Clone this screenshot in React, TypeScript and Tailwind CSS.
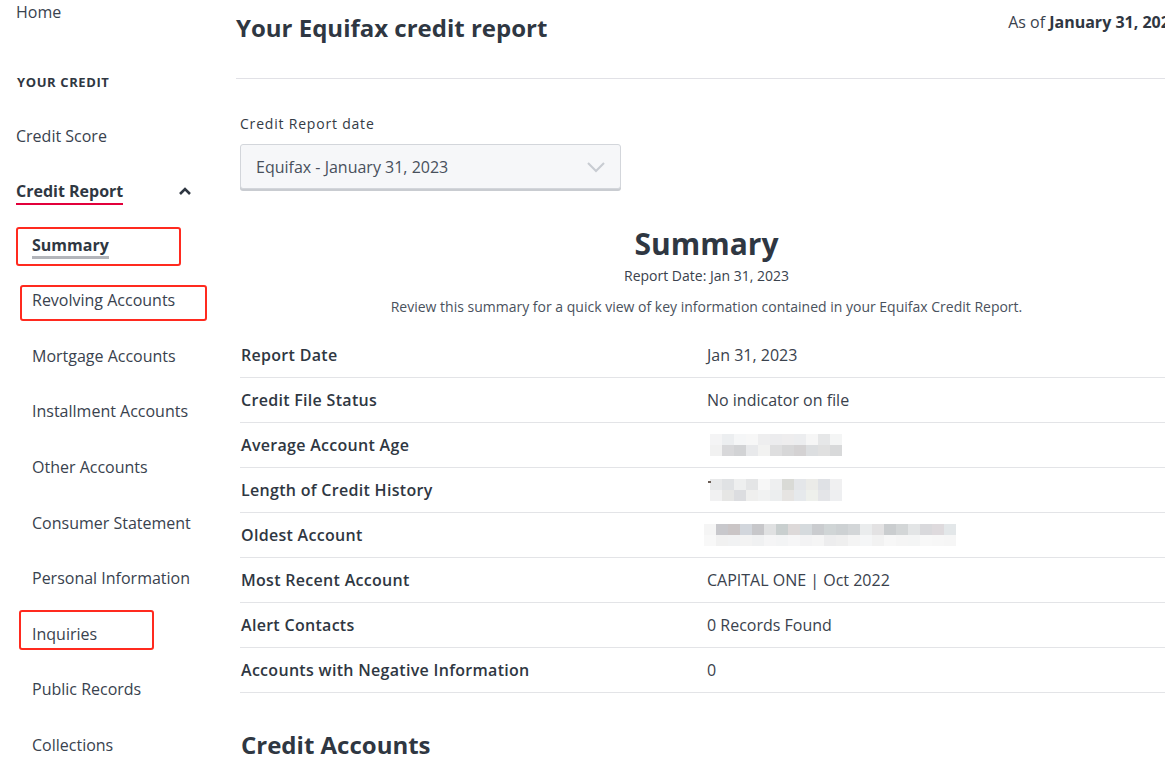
import React from "react";

const font = { fontFamily: '"Open Sans", "Liberation Sans", sans-serif' };

function Mosaic({ rows, cell = 12, h = 11 }: { rows: string[][]; cell?: number; h?: number }) {
  const w = Math.max(...rows.map((r) => r.length)) * cell;
  return (
    <svg width={w} height={rows.length * h} className="block">
      {rows.map((r, i) =>
        r.map((c, j) => <rect key={i + "-" + j} x={j * cell} y={i * h} width={cell} height={h} fill={c} />)
      )}
    </svg>
  );
}

const subItems = [
  "Revolving Accounts",
  "Mortgage Accounts",
  "Installment Accounts",
  "Other Accounts",
  "Consumer Statement",
  "Personal Information",
  "Inquiries",
  "Public Records",
  "Collections",
];

function Sidebar() {
  return (
    <aside className="w-[236px] shrink-0 text-[#39424e]">
      <div className="pl-4 text-[16px] leading-6">Home</div>
      <div className="pl-[17px] mt-[49px] text-[13px] leading-[18px] font-bold tracking-[0.6px] text-[#2f3742]">YOUR CREDIT</div>
      <div className="pl-4 mt-[33px] text-[16px] leading-6">Credit Score</div>
      <div className="pl-4 mt-[31px] flex items-center">
        <span className="font-bold text-[16px] leading-6 border-b-2 border-[#e2003b] text-[#2f3742]">Credit Report</span>
        <svg width="14" height="10" viewBox="0 0 14 10" className="ml-[55px] mt-[-2px]">
          <path d="M2 8 L7 3 L12 8" fill="none" stroke="#2f3742" strokeWidth="2.6" />
        </svg>
      </div>
      <div className="mt-[12px]">
        <div className="relative h-[55.5px] flex items-center pl-8">
          <span className="font-bold text-[16px] leading-[22px] border-b-[3px] border-[#b3b5ba] text-[#2f3742] mt-[3px]">Summary</span>
          <div className="absolute left-4 top-[10px] w-[165px] h-[39px] border-2 border-[#ff2a1f] rounded-[3px]" />
        </div>
        {subItems.map((s) => (
          <div key={s} className="relative h-[55.6px] flex items-center pl-8 text-[16px] leading-[22px]">
            {s}
            {s === "Revolving Accounts" && (
              <div className="absolute left-5 top-[12px] w-[187px] h-[36px] border-2 border-[#ff2a1f] rounded-[3px]" />
            )}
            {s === "Inquiries" && (
              <div className="absolute left-[19px] top-[4px] w-[135px] h-[40px] border-2 border-[#ff2a1f] rounded-[3px]" />
            )}
          </div>
        ))}
      </div>
    </aside>
  );
}

const rows: { label: string; value?: string; mosaic?: React.ReactNode }[] = [
  { label: "Report Date", value: "Jan 31, 2023" },
  { label: "Credit File Status", value: "No indicator on file" },
  {
    label: "Average Account Age",
    mosaic: (
      <div className="ml-[3px]">
        <Mosaic
          rows={[
            ["#f4f4f5", "#eceef0", "#f5f6f7", "#f7f7f7", "#eeeeef", "#ececee", "#eeedee", "#ecedef", "#f6f6f6", "#e6e7e8", "#f4f5f5"],
            ["#f1f1f1", "#d8d8da", "#d2d3d5", "#e8e9eb", "#f2f2f1", "#dededf", "#d7d7d8", "#d4d2d3", "#dcdee0", "#e0e0e0", "#d8d9da"],
          ]}
        />
      </div>
    ),
  },
  {
    label: "Length of Credit History",
    mosaic: (
      <div className="ml-[3px] relative">
        <Mosaic
          rows={[
            ["#e8e9ea", "#e0e2e4", "#eeefef", "#e4e5e6", "#f7f7f7", "#eeeff0", "#d9dad6", "#e4e6e9", "#ebebe8", "#dfe1e5", "#f0f0f1"],
            ["#f1f1f2", "#e6e6e5", "#dcdde0", "#efefee", "#f1f2f2", "#eceeef", "#e6e4e2", "#e6e9ec", "#eef0ec", "#e4e5e8", "#eeeff1"],
          ]}
        />
        <div className="absolute left-[-2px] top-[2px] w-[3px] h-[2px] bg-[#6b5d55]" />
      </div>
    ),
  },
  {
    label: "Oldest Account",
    mosaic: (
      <div className="ml-[-3px]">
        <Mosaic
          rows={[
            ["#f5f5f5", "#c8c8cc", "#cac5c6", "#d2d6dc", "#c7c7ca", "#e0e1e2", "#c9cfcf", "#ddd9d9", "#d5dadd", "#cacccf", "#d0d5d6", "#cdd1d3", "#d3d6d8", "#eaeced", "#e3e2e3", "#cacdcf", "#d3d6d7", "#e3e5e6", "#d9d9dc", "#dedadd", "#e3e7e9"],
            ["#f8f8f8", "#f1f1f1", "#f1f2f3", "#f3f3f3", "#f0f1f2", "#f5f5f6", "#f3f4f5", "#f6f6f7", "#f3f3f4", "#f5f5f5", "#ededee", "#efefef", "#f4f4f4", "#f5f6f7", "#f2f2f2", "#f7f7f7", "#f5f5f5", "#f4f5f5", "#f8f8f8", "#f7f7f7", "#f6f6f6"],
          ]}
        />
      </div>
    ),
  },
  { label: "Most Recent Account", value: "CAPITAL ONE | Oct 2022" },
  { label: "Alert Contacts", value: "0 Records Found" },
  { label: "Accounts with Negative Information", value: "0" },
];

export default function App() {
  return (
    <div className="w-[1165px] h-[783px] overflow-hidden bg-white flex" style={font}>
      <Sidebar />
      <main className="w-[937px] shrink-0">
        <header className="h-[79px] border-b border-[#e1e1e6] flex justify-between items-start pt-[10px]">
          <h1 className="mt-[2px] text-[24px] leading-8 font-bold text-[#2f3742]">Your Equifax credit report</h1>
          <div className="mr-[-6px] text-[16px] leading-6 text-[#3a424d] whitespace-nowrap">
            As of <span className="font-bold text-[#2f3742]">January 31, 2023</span>
          </div>
        </header>
        <div className="pl-1">
          <div className="mt-[35px] text-[14px] leading-5 tracking-[0.8px] text-[#333b45]">Credit Report date</div>
          <div className="mt-[10px] w-[381px] h-[45px] bg-[#f6f7f9] border border-[#d3d6db] rounded-[3px] shadow-[0_2px_0_#c9ccd1] flex items-center justify-between pl-[15px] pr-[14px]">
            <span className="text-[16px] leading-6 text-[#48505c]">Equifax - January 31, 2023</span>
            <svg width="20" height="12" viewBox="0 0 20 12">
              <path d="M2 2 L10 10 L18 2" fill="none" stroke="#c8ccd2" strokeWidth="2" />
            </svg>
          </div>
          <h2 className="mt-[37px] text-center text-[30px] leading-9 font-bold text-[#2f3742]">Summary</h2>
          <div className="mt-[4px] text-center text-[14px] leading-5 text-[#3a424d]">Report Date: Jan 31, 2023</div>
          <div className="mt-[11px] text-center text-[14px] leading-5 text-[#4a525d]">
            Review this summary for a quick view of key information contained in your Equifax Credit Report.
          </div>
          <div className="mt-[16px]">
            {rows.map((r) => (
              <div key={r.label} className="h-[45px] border-b border-[#e3e4e7] grid grid-cols-2 items-center pl-px">
                <div className="text-[16px] leading-6 font-semibold tracking-[0.3px] text-[#2f3742]">{r.label}</div>
                <div className="text-[16px] leading-6 text-[#3a424d]">{r.value ?? r.mosaic}</div>
              </div>
            ))}
          </div>
          <h2 className="mt-[36px] pl-px text-[24px] leading-8 font-bold text-[#2f3742]">Credit Accounts</h2>
        </div>
      </main>
    </div>
  );
}
